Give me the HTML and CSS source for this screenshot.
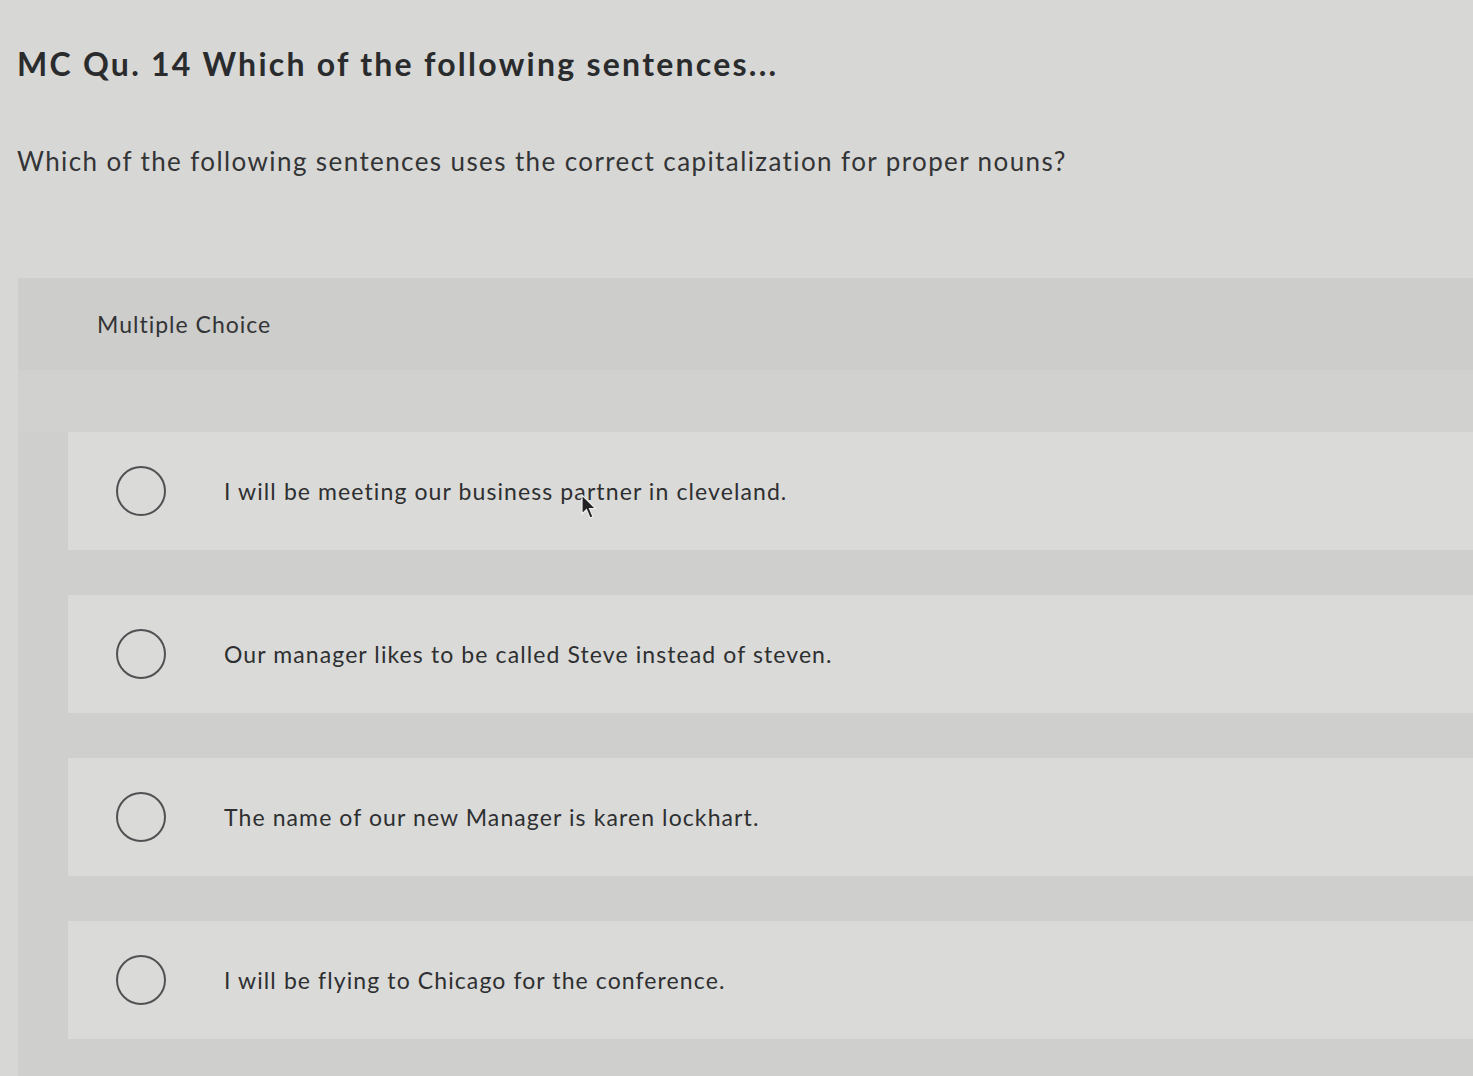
FILE: index.html
```html
<!DOCTYPE html>
<html lang="en">
<head>
<meta charset="utf-8">
<title>MC Qu. 14</title>
<link rel="stylesheet" href="styles.css">
</head>
<body>
<main class="page">
  <h1 class="title">MC Qu. 14 Which of the following sentences...</h1>
  <p class="prompt">Which of the following sentences uses the correct capitalization for proper nouns?</p>
  <section class="panel">
    <div class="panel-head">Multiple Choice</div>
    <div class="panel-spacer"></div>
    <ul class="options">
      <li class="option"><span class="radio"></span><span class="option-text">I will be meeting our business partner in cleveland.</span></li>
      <li class="option"><span class="radio"></span><span class="option-text">Our manager likes to be called Steve instead of steven.</span></li>
      <li class="option"><span class="radio"></span><span class="option-text">The name of our new Manager is karen lockhart.</span></li>
      <li class="option"><span class="radio"></span><span class="option-text">I will be flying to Chicago for the conference.</span></li>
    </ul>
  </section>
  <svg class="cursor" width="18" height="26" viewBox="0 0 18 26"><path d="M2 1 L2 20 L6.5 15.5 L10 24 L13 22.8 L9.5 14.5 L15.5 14.5 Z" fill="#222" stroke="#eee" stroke-width="1.2"/></svg>
</main>
</body>
</html>
```

FILE: styles.css
```css
html, body {
  margin: 0;
  padding: 0;
  background: #d7d7d5;
}
.page {
  position: relative;
  min-height: 1076px;
  overflow: hidden;
  font-family: Lato, "Open Sans", "Liberation Sans", sans-serif;
  color: #2e2f31;
}
.title {
  margin: 0;
  padding: 45px 0 0 17px;
  font-size: 32px;
  line-height: 38px;
  font-weight: 700;
  letter-spacing: 2.25px;
  color: #2a2b2d;
}
.prompt {
  margin: 0;
  padding: 61px 0 0 17px;
  font-size: 26px;
  line-height: 34px;
  letter-spacing: 1.4px;
  color: #333436;
}
.panel {
  margin: 100px 0 0 18px;
  background: #cfcfcd;
  padding-bottom: 60px;
}
.panel-head {
  height: 92px;
  display: flex;
  align-items: center;
  padding-left: 79px;
  font-size: 23px;
  letter-spacing: 1px;
  color: #333436;
  background: #cdcdcb;
}
.panel-spacer {
  height: 62px;
  background: #d1d1cf;
}
.options {
  list-style: none;
  margin: 0;
  padding: 0 0 0 50px;
  display: flex;
  flex-direction: column;
  gap: 45px;
}
.option {
  height: 118px;
  display: flex;
  align-items: center;
  padding-left: 48px;
  background: #dadad8;
}
.radio {
  width: 46px;
  height: 46px;
  border: 2px solid #505153;
  border-radius: 50%;
  flex: none;
}
.option-text {
  margin-left: 58px;
  font-size: 23px;
  letter-spacing: 1.1px;
  color: #2e2f31;
}
.cursor {
  position: absolute;
  left: 580px;
  top: 494px;
}
```
